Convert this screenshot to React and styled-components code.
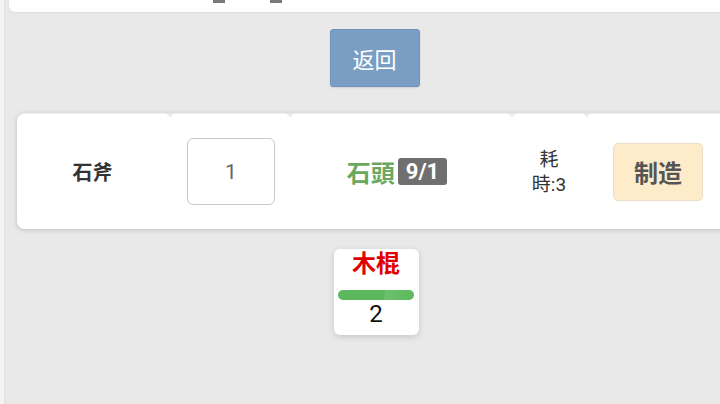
import React from "react";
import styled, { createGlobalStyle } from "styled-components";

const Global = createGlobalStyle`
  html, body { margin: 0; padding: 0; background: #f4f4f4; overflow: hidden; }
  body { font-family: Roboto, "Noto Sans CJK SC", "Noto Sans", sans-serif; }
`;

const Page = styled.div`
  margin-left: 4px;
  width: 742px;
  height: 404px;
  background: #e9e9e9;
  display: flex;
  flex-direction: column;
  align-items: stretch;
  border-left: 1px solid #e2e2e2;
  box-sizing: border-box;
`;

const TopCard = styled.div`
  margin-left: 4px;
  height: 12px;
  background: #fff;
  border-bottom-left-radius: 6px;
  box-shadow: 0 1px 2px rgba(0, 0, 0, 0.06);
  display: flex;
  gap: 45px;
  padding-left: 204px;
`;

const Mark = styled.span`
  width: 12px;
  height: 3px;
  background: #7a7a7a;
`;

const Center = styled.div`
  display: flex;
  justify-content: center;
  margin-top: ${(p) => p.$top}px;
`;

const BackButton = styled.button`
  width: 90px;
  height: 58px;
  border: 1px solid #6f93bb;
  border-radius: 3px;
  background: #7a9dc4;
  color: #fff;
  font-family: inherit;
  font-size: 22px;
  padding: 0;
  margin-left: -2px;
  box-shadow: 0 1px 2px rgba(0, 0, 0, 0.1);
`;

const Row = styled.div`
  margin-top: 26px;
  margin-left: 12px;
  margin-right: 13px;
  height: 116px;
  display: grid;
  grid-template-columns: 153px 120px 222px 75px 1fr;
  border-radius: 8px;
  box-shadow: 0 1px 5px rgba(0, 0, 0, 0.18);
`;

const Cell = styled.div`
  background: #fff;
  border-radius: ${(p) => (p.$first ? "8px 6px 0 8px" : "6px 6px 0 0")};
  display: flex;
  flex-direction: column;
  align-items: center;
  justify-content: center;
  color: #333;
  border-top: 1px solid #f1f1f1;
`;

const Name = styled.div`
  font-size: 20px;
  font-weight: 700;
  color: #333;
  margin-left: -2px;
`;

const QtyBox = styled.div`
  width: 86px;
  height: 65px;
  border: 1px solid #c9c9c9;
  border-radius: 6px;
  display: flex;
  align-items: center;
  justify-content: center;
  font-size: 21px;
  color: #666;
  margin-left: 2px;
`;

const Material = styled.div`
  display: flex;
  align-items: center;
  gap: 3px;
  margin-left: -8px;
`;

const MatName = styled.span`
  font-size: 24px;
  font-weight: 700;
  color: #6aa860;
`;

const Badge = styled.span`
  background: #6f6f6f;
  color: #fff;
  font-size: 22px;
  font-weight: 700;
  border-radius: 3px;
  padding: 0 8px;
  height: 27px;
  line-height: 27px;
`;

const Cost = styled.div`
  font-size: 19px;
  line-height: 25px;
  color: #333;
  text-align: center;
  margin-left: -1px;
`;

const MakeButton = styled.button`
  width: 90px;
  height: 58px;
  background: #fdebc9;
  border: 1px solid #eadfc6;
  border-radius: 5px;
  font-family: inherit;
  font-size: 24px;
  font-weight: 700;
  color: #555;
  padding: 0;
  margin-left: -4px;
`;

const ItemCard = styled.div`
  width: 85px;
  height: 86px;
  background: #fff;
  border-radius: 6px;
  box-shadow: 0 2px 6px rgba(0, 0, 0, 0.15);
  display: flex;
  flex-direction: column;
  align-items: center;
  box-sizing: border-box;
  margin-left: 1px;
`;

const ItemName = styled.div`
  font-size: 24px;
  font-weight: 700;
  color: #e00000;
  line-height: 30px;
`;

const Bar = styled.div`
  margin-top: 11px;
  width: 76px;
  height: 10px;
  border-radius: 5px;
  background: linear-gradient(100deg, #5cb85c 0%, #5cb85c 60%, #6cc26c 62%, #5cb85c 100%);
`;

const Count = styled.div`
  font-size: 24px;
  color: #111;
  line-height: 28px;
`;

export default function App() {
  return (
    <>
      <Global />
      <Page>
        <TopCard>
          <Mark />
          <Mark />
        </TopCard>
        <Center $top={17}>
          <BackButton>返回</BackButton>
        </Center>
        <Row>
          <Cell $first>
            <Name>石斧</Name>
          </Cell>
          <Cell>
            <QtyBox>1</QtyBox>
          </Cell>
          <Cell>
            <Material>
              <MatName>石頭</MatName>
              <Badge>9/1</Badge>
            </Material>
          </Cell>
          <Cell>
            <Cost>
              耗
              <br />
              時:3
            </Cost>
          </Cell>
          <Cell>
            <MakeButton>制造</MakeButton>
          </Cell>
        </Row>
        <Center $top={20}>
          <ItemCard>
            <ItemName>木棍</ItemName>
            <Bar />
            <Count>2</Count>
          </ItemCard>
        </Center>
      </Page>
    </>
  );
}
